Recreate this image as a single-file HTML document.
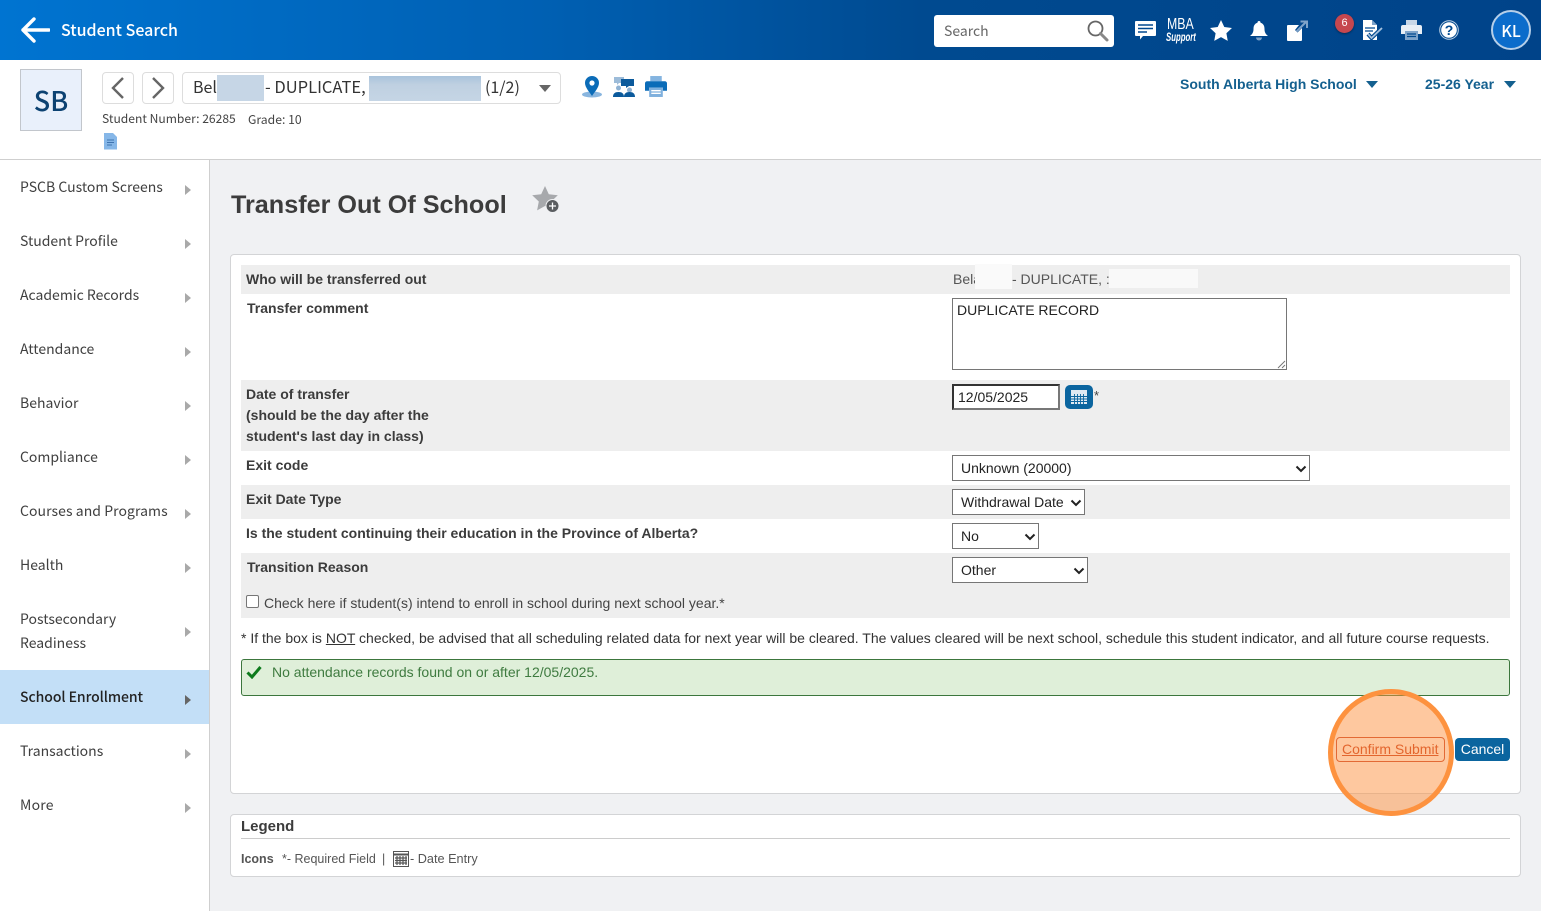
<!DOCTYPE html>
<html><head><meta charset="utf-8"><title>Transfer Out Of School</title>
<style>
*{box-sizing:border-box}
html,body{margin:0;padding:0;width:1541px;height:911px;overflow:hidden;background:#f0f1f3;font-family:"Liberation Sans",sans-serif;color:#333}
.a{position:absolute}
.t{position:absolute;white-space:nowrap}
.n{font-family:"Noto Sans CJK JP","Liberation Sans",sans-serif}
.nav{position:absolute;left:20px;font-family:"Noto Sans CJK JP",sans-serif;font-size:14px;line-height:24px;color:#3f3f3f;white-space:nowrap}
.tri{position:absolute;left:185px;width:0;height:0;border-left:6px solid #a9a9a9;border-top:5px solid transparent;border-bottom:5px solid transparent}
.row{position:absolute;left:241px;width:1269px;background:#eee}
.l{position:absolute;font-size:14px;font-weight:bold;color:#3c3c3c;line-height:21px;white-space:nowrap}
.sel{position:absolute;left:952px;height:26px;background:#fff;border:1px solid #767676;font-size:14px;line-height:24px;color:#222;padding-left:8px}
.sel svg{position:absolute;top:9px}
</style></head><body>

<!-- top bar -->
<div class="a" style="left:0;top:0;width:1541px;height:60px;background:linear-gradient(90deg,#0074d1 0%,#0060b3 35%,#004a90 60%,#004389 100%)"></div>
<svg class="a" style="left:20px;top:16px" width="30" height="28" viewBox="0 0 30 28"><path d="M14 3L3 14l11 11M3 14h26" fill="none" stroke="#fff" stroke-width="3.4" stroke-linecap="round" stroke-linejoin="round"/></svg>
<div class="t n" style="left:61px;top:17px;font-size:16px;line-height:24px;font-weight:500;color:#fff">Student Search</div>

<div class="a" style="left:934px;top:15px;width:180px;height:32px;background:#fff;border-radius:3px"></div>
<div class="t n" style="left:944px;top:20px;font-size:14px;line-height:22px;color:#666">Search</div>
<svg class="a" style="left:1086px;top:19px" width="24" height="24" viewBox="0 0 24 24"><circle cx="9.500" cy="9.500" r="7" fill="none" stroke="#666" stroke-width="1.800"/><path d="M14.500 14.500L21 21" stroke="#888" stroke-width="3" stroke-linecap="round"/></svg>

<svg class="a" style="left:1135px;top:21px" width="21" height="19" viewBox="0 0 21 19"><path d="M1 0h19a1 1 0 0 1 1 1v13a1 1 0 0 1-1 1H8l-3 3.500V15H1a1 1 0 0 1-1-1V1a1 1 0 0 1 1-1z" fill="#fff"/><path d="M3 4h15M3 7.500h15M3 11h9" stroke="#00498f" stroke-width="1.500"/></svg>
<div class="t" style="left:1167px;top:17px;font-size:16px;line-height:16px;color:#fff;transform:scaleX(.77);transform-origin:left">MBA</div>
<div class="t" style="left:1166px;top:31px;font-size:12px;line-height:13px;font-weight:bold;font-style:italic;color:#fff;transform:scaleX(.65);transform-origin:left">Support</div>
<svg class="a" style="left:1210px;top:20px" width="22" height="21" viewBox="0 0 24 23"><path d="M12 0l3.600 7.600 8.400 1.100-6.100 5.800 1.500 8.300L12 18.800l-7.400 4 1.500-8.300L0 8.700l8.400-1.100z" fill="#fff"/></svg>
<svg class="a" style="left:1250px;top:21px" width="18" height="20" viewBox="0 0 18 20"><path d="M9 0a1.500 1.500 0 0 1 1.500 1.800C13.500 2.700 14.500 5 14.500 8c0 3 1 5 3.500 7H0c2.500-2 3.500-4 3.500-7 0-3 1-5.300 4-6.200A1.500 1.500 0 0 1 9 0z" fill="#fff"/><path d="M6 16.500h6a3 3 0 0 1-6 0z" fill="#7fa3c9"/></svg>
<svg class="a" style="left:1287px;top:20px" width="21" height="21" viewBox="0 0 21 21"><path d="M1 5h11l-2 2.500v0L8 10l2.500 2.500L15 8v12a1 1 0 0 1-1 1H1a1 1 0 0 1-1-1V6a1 1 0 0 1 1-1z" fill="#fff"/><path d="M9.500 11.500L19 2M13.500 1.500H20V8" fill="none" stroke="#7fa3c9" stroke-width="2"/></svg>
<div class="a" style="left:1335px;top:14px;width:19px;height:19px;border-radius:50%;background:#c6474f;box-shadow:0 1px 2px rgba(0,0,0,.4)"></div>
<div class="t" style="left:1335px;top:14px;width:19px;text-align:center;font-size:11px;line-height:19px;color:#fff">6</div>
<svg class="a" style="left:1362px;top:20px" width="22" height="21" viewBox="0 0 22 21"><path d="M1 0h9l5 5v15H1z" fill="#fff"/><path d="M10 0v5h5" fill="#7fa3c9"/><path d="M3 8h10M3 11h8" stroke="#00498f" stroke-width="1.300"/><path d="M6 14l3.500 4L20 8" fill="none" stroke="#00498f" stroke-width="4"/><path d="M6 14l3.500 4L20 8" fill="none" stroke="#a8c2de" stroke-width="1.800"/></svg>
<svg class="a" style="left:1401px;top:20px" width="21" height="20" viewBox="0 0 21 20"><path d="M5 0h11v5H5z" fill="#c7d6e7"/><path d="M2 5h17a2 2 0 0 1 2 2v7h-4v-3H4v3H0V7a2 2 0 0 1 2-2z" fill="#e8eef5"/><path d="M4 11h13v9H4z" fill="#7fa3c9"/><path d="M6 14h9M6 16.500h9" stroke="#00498f" stroke-width="1.200"/></svg>
<svg class="a" style="left:1439px;top:20px" width="20" height="20" viewBox="0 0 20 20"><circle cx="10" cy="10" r="9.300" fill="#00498f" stroke="#bcd0e4" stroke-width="1"/><circle cx="10" cy="10" r="7.800" fill="#fff"/><text x="10" y="15" text-anchor="middle" font-family="Liberation Sans" font-size="14" font-weight="bold" fill="#00498f">?</text></svg>
<div class="a" style="left:1491px;top:10px;width:40px;height:40px;border-radius:50%;background:#0b6ccb;border:2px solid #b5cfe9"></div>
<div class="t n" style="left:1491px;top:18px;width:40px;text-align:center;font-size:16px;line-height:24px;font-weight:500;color:#fff">KL</div>

<!-- student header -->
<div class="a" style="left:0;top:60px;width:1541px;height:100px;background:#fff;border-bottom:1px solid #cfcfcf"></div>
<div class="a" style="left:20px;top:69px;width:62px;height:62px;background:#e9f0fb;border:1px solid #c2c6cc"></div>
<div class="t n" style="left:20px;top:80px;width:62px;text-align:center;font-size:27px;line-height:40px;font-weight:500;color:#0c4272">SB</div>
<div class="a" style="left:102px;top:72px;width:32px;height:32px;background:#fff;border:1px solid #ddd;border-radius:4px"></div>
<svg class="a" style="left:110px;top:77px" width="16" height="22" viewBox="0 0 16 22"><path d="M13 1L3 11l10 10" fill="none" stroke="#666" stroke-width="2.400"/></svg>
<div class="a" style="left:142px;top:72px;width:32px;height:32px;background:#fff;border:1px solid #ddd;border-radius:4px"></div>
<svg class="a" style="left:150px;top:77px" width="16" height="22" viewBox="0 0 16 22"><path d="M3 1l10 10L3 21" fill="none" stroke="#666" stroke-width="2.400"/></svg>
<div class="a" style="left:182px;top:72px;width:379px;height:32px;background:#fff;border:1px solid #ddd;border-radius:4px"></div>
<div class="t n" style="left:193px;top:74px;font-size:16px;line-height:24px;color:#333">Bel</div>
<div class="a" style="left:217px;top:75px;width:47px;height:26px;background:#c6d6e6"></div>
<div class="t n" style="left:265px;top:74px;font-size:16.500px;line-height:24px;color:#333">- DUPLICATE,</div>
<div class="a" style="left:369px;top:76px;width:112px;height:25px;background:linear-gradient(#a9c3dc 0,#bfd0e1 35%,#c5d5e5 100%)"></div>
<div class="t n" style="left:485px;top:74px;font-size:16px;line-height:24px;color:#333">(1/2)</div>
<div class="a" style="left:539px;top:85px;width:0;height:0;border-left:6px solid transparent;border-right:6px solid transparent;border-top:7px solid #666"></div>
<div class="t n" style="left:102px;top:110px;font-size:12.100px;line-height:18px;color:#444">Student Number: 26285</div>
<div class="t n" style="left:248px;top:110px;font-size:12.200px;line-height:18px;color:#444">Grade: 10</div>
<svg class="a" style="left:104px;top:133px" width="14" height="17" viewBox="0 0 14 17"><path d="M0 0h9l4 4v12.500H0z" fill="#86b7e8"/><path d="M3 7h7M3 9.500h7M3 12h5" stroke="#3f74b0" stroke-width="1"/></svg>
<svg class="a" style="left:581px;top:76px" width="22" height="22" viewBox="0 0 22 22"><ellipse cx="11" cy="18.500" rx="10" ry="3" fill="#8ab6df"/><path d="M11 0a7 7 0 0 1 7 7c0 4.500-4.500 9-7 13-2.500-4-7-8.500-7-13a7 7 0 0 1 7-7z" fill="#0b6cb8"/><circle cx="11" cy="7" r="2.600" fill="#fff"/></svg>
<svg class="a" style="left:613px;top:76px" width="22" height="22" viewBox="0 0 22 22"><path d="M1 1h10v6H6l-2 2V7H1z" fill="#9dbcd9"/><path d="M8 3h13v7h-5l-3 2v-2H8z" fill="#0b5a9c"/><circle cx="5.500" cy="12" r="2.500" fill="#8fb2d3"/><circle cx="16.500" cy="14" r="2.500" fill="#8fb2d3"/><path d="M0 21c0-3.500 2-5 5.500-5s5.500 1.500 5.500 5zM11 21c0-3.500 2-5 5.500-5s5.500 1.500 5.500 5z" fill="#0b5a9c"/></svg>
<svg class="a" style="left:645px;top:76px" width="22" height="21" viewBox="0 0 21 20"><path d="M5 0h11v5H5z" fill="#84b4e0"/><path d="M2 5h17a2 2 0 0 1 2 2v7h-4v-3H4v3H0V7a2 2 0 0 1 2-2z" fill="#0b6cb8"/><path d="M4 11h13v9H4z" fill="#7fb0dd"/><path d="M6 14h9M6 16.500h9" stroke="#fff" stroke-width="1.200"/></svg>
<div class="t" style="left:1180px;top:76px;font-size:14px;line-height:17px;font-weight:bold;color:#14608f">South Alberta High School</div>
<div class="a" style="left:1366px;top:81px;width:0;height:0;border-left:6px solid transparent;border-right:6px solid transparent;border-top:7px solid #14608f"></div>
<div class="t" style="left:1425px;top:76px;font-size:14px;line-height:17px;font-weight:bold;color:#14608f">25-26 Year</div>
<div class="a" style="left:1504px;top:81px;width:0;height:0;border-left:6px solid transparent;border-right:6px solid transparent;border-top:7px solid #14608f"></div>

<!-- sidebar -->
<div class="a" style="left:0;top:160px;width:210px;height:751px;background:#fff;border-right:1px solid #cfcfcf"></div>
<div class="a" style="left:0;top:670px;width:209px;height:54px;background:#c3dff7"></div>
<div class="nav" style="top:175px">PSCB Custom Screens</div><div class="tri" style="top:185px"></div>
<div class="nav" style="top:229px">Student Profile</div><div class="tri" style="top:239px"></div>
<div class="nav" style="top:283px">Academic Records</div><div class="tri" style="top:293px"></div>
<div class="nav" style="top:337px">Attendance</div><div class="tri" style="top:347px"></div>
<div class="nav" style="top:391px">Behavior</div><div class="tri" style="top:401px"></div>
<div class="nav" style="top:445px">Compliance</div><div class="tri" style="top:455px"></div>
<div class="nav" style="top:499px;letter-spacing:.06px">Courses and Programs</div><div class="tri" style="top:509px"></div>
<div class="nav" style="top:553px">Health</div><div class="tri" style="top:563px"></div>
<div class="nav" style="top:607px">Postsecondary<br>Readiness</div><div class="tri" style="top:627px"></div>
<div class="nav" style="top:685px;font-weight:500;color:#222;letter-spacing:-.06px">School Enrollment</div><div class="tri" style="top:695px;border-left-color:#666"></div>
<div class="nav" style="top:739px">Transactions</div><div class="tri" style="top:749px"></div>
<div class="nav" style="top:793px;letter-spacing:.2px">More</div><div class="tri" style="top:803px"></div>

<!-- title -->
<div class="t" style="left:231px;top:189px;font-size:25.200px;line-height:32px;font-weight:bold;color:#3c3c3c">Transfer Out Of School</div>
<svg class="a" style="left:532px;top:186px" width="28" height="28" viewBox="0 0 28 28"><path d="M13 0l3.800 8.200 9 1.100-6.600 6.200 1.700 8.900L13 20l-7.900 4.400 1.700-8.900L.2 9.300l9-1.100z" fill="#a7a9ac"/><circle cx="20.500" cy="20" r="6.500" fill="#5a5d60" stroke="#f0f1f3" stroke-width="1"/><path d="M20.500 16.500v7M17 20h7" stroke="#fff" stroke-width="1.300"/></svg>

<!-- main card -->
<div class="a" style="left:230px;top:254px;width:1291px;height:540px;background:#fff;border:1px solid #d3d4d6;border-radius:4px"></div>
<div class="row" style="top:265px;height:29px"></div>
<div class="row" style="top:380px;height:71px"></div>
<div class="row" style="top:485px;height:34px"></div>
<div class="row" style="top:553px;height:65px"></div>

<div class="l" style="left:246px;top:269px">Who will be transferred out</div>
<div class="l" style="left:247px;top:298px">Transfer comment</div>
<div class="l" style="left:246px;top:384px">Date of transfer<br>(should be the day after the<br>student's last day in class)</div>
<div class="l" style="left:246px;top:455px">Exit code</div>
<div class="l" style="left:246px;top:489px">Exit Date Type</div>
<div class="l" style="left:246px;top:523px">Is the student continuing their education in the Province of Alberta?</div>
<div class="l" style="left:247px;top:557px">Transition Reason</div>

<div class="t" style="left:953px;top:269px;font-size:14px;line-height:21px;color:#555">Bela</div>
<div class="a" style="left:975px;top:264px;width:37px;height:25px;background:#fafafa"></div>
<div class="t" style="left:1012px;top:269px;font-size:14px;line-height:21px;color:#555">- DUPLICATE, :</div>
<div class="a" style="left:1109px;top:269px;width:89px;height:19px;background:#f9f9f9"></div>

<div class="a" style="left:952px;top:298px;width:335px;height:72px;background:#fff;border:1px solid #767676"></div>
<div class="t" style="left:957px;top:302px;font-size:14px;line-height:17px;color:#222">DUPLICATE RECORD</div>
<svg class="a" style="left:1276px;top:359px" width="10" height="10" viewBox="0 0 10 10"><path d="M9 2L2 9M9 6L6 9" stroke="#777" stroke-width="1"/></svg>

<div class="a" style="left:952px;top:384px;width:108px;height:26px;background:#fff;border:2px solid;border-color:#333 #777 #777 #333"></div>
<div class="t" style="left:958px;top:389px;font-size:14px;line-height:17px;color:#222">12/05/2025</div>
<div class="a" style="left:1065px;top:385px;width:28px;height:24px;background:#0b659f;border-radius:5px"></div>
<svg class="a" style="left:1071px;top:390px" width="16" height="14" viewBox="0 0 16 14"><rect x=".5" y=".5" width="15" height="13" fill="#dfe9f2" stroke="#dfe9f2"/><path d="M0 3.500h16" stroke="#dfe9f2" stroke-width="2"/><path d="M3.500 4v10M6.500 4v10M9.500 4v10M12.500 4v10M0 6.500h16M0 9h16M0 11.500h16" stroke="#0b659f" stroke-width=".9"/></svg>
<div class="t" style="left:1094px;top:388px;font-size:13px;line-height:15px;color:#444">*</div>

<div class="sel" style="top:455px;width:358px">Unknown (20000)<svg style="left:342px" width="12" height="8" viewBox="0 0 12 8"><path d="M1.500 1.500L6 6l4.500-4.500" fill="none" stroke="#222" stroke-width="2"/></svg></div>
<div class="sel" style="top:489px;width:133px">Withdrawal Date<svg style="left:117px" width="12" height="8" viewBox="0 0 12 8"><path d="M1.500 1.500L6 6l4.500-4.500" fill="none" stroke="#222" stroke-width="2"/></svg></div>
<div class="sel" style="top:523px;width:87px">No<svg style="left:71px" width="12" height="8" viewBox="0 0 12 8"><path d="M1.500 1.500L6 6l4.500-4.500" fill="none" stroke="#222" stroke-width="2"/></svg></div>
<div class="sel" style="top:557px;width:136px">Other<svg style="left:120px" width="12" height="8" viewBox="0 0 12 8"><path d="M1.500 1.500L6 6l4.500-4.500" fill="none" stroke="#222" stroke-width="2"/></svg></div>

<div class="a" style="left:246px;top:595px;width:13px;height:13px;background:#fff;border:1px solid #767676;border-radius:2px"></div>
<div class="t" style="left:264px;top:593px;font-size:14px;line-height:21px;color:#444">Check here if student(s) intend to enroll in school during next school year.*</div>
<div class="t" style="left:241px;top:628px;font-size:14px;line-height:21px;color:#333">* If the box is <u>NOT</u> checked, be advised that all scheduling related data for next year will be cleared. The values cleared will be next school, schedule this student indicator, and all future course requests.</div>

<div class="a" style="left:241px;top:659px;width:1269px;height:37px;background:#dfefd9;border:1px solid #3c763d;border-radius:3px"></div>
<svg class="a" style="left:246px;top:665px" width="16" height="14" viewBox="0 0 16 14"><path d="M1.500 7.500L6 12 14.500 2" fill="none" stroke="#0d7a1c" stroke-width="3"/></svg>
<div class="t" style="left:272px;top:662px;font-size:14px;line-height:21px;color:#3f7b40">No attendance records found on or after 12/05/2025.</div>

<div class="a" style="left:1336px;top:737px;width:109px;height:25px;border:1px solid #c8432a;border-radius:4px"></div>
<div class="t" style="left:1342px;top:741px;font-size:14px;line-height:17px;color:#c8381a;text-decoration:underline">Confirm Submit</div>
<div class="a" style="left:1455px;top:738px;width:55px;height:23px;background:#0b659f;border-radius:4px"></div>
<div class="t" style="left:1455px;top:741px;width:55px;text-align:center;font-size:14px;line-height:17px;color:#fff">Cancel</div>

<!-- legend -->
<div class="a" style="left:230px;top:814px;width:1291px;height:63px;background:#fff;border:1px solid #d3d4d6;border-radius:4px"></div>
<div class="t" style="left:241px;top:818px;font-size:15px;line-height:18px;font-weight:bold;color:#3c3c3c">Legend</div>
<div class="a" style="left:241px;top:838px;width:1269px;height:1px;background:#ccc"></div>
<div class="t" style="left:241px;top:851px;font-size:12.500px;line-height:17px;font-weight:bold;color:#555">Icons</div>
<div class="t" style="left:282px;top:851px;font-size:12.500px;line-height:17px;color:#555">*- Required Field</div>
<div class="t" style="left:382px;top:851px;font-size:12.500px;line-height:17px;color:#555">|</div>
<svg class="a" style="left:393px;top:851px" width="16" height="16" viewBox="0 0 16 16"><rect x=".5" y=".5" width="15" height="15" fill="#fff" stroke="#555"/><path d="M0 3.500h16" stroke="#555" stroke-width="2"/><path d="M2 7h12M2 9.500h12M2 12h12M4 5v9M7 5v9M10 5v9M13 5v9" stroke="#555" stroke-width="1.200"/></svg>
<div class="t" style="left:410px;top:851px;font-size:12.700px;line-height:17px;color:#555">- Date Entry</div>

<!-- highlight circle -->
<div class="a" style="left:1328px;top:689px;width:126px;height:127px;border-radius:50%;background:rgba(253,146,63,.5);border:5px solid #fd923f"></div>
</body></html>
